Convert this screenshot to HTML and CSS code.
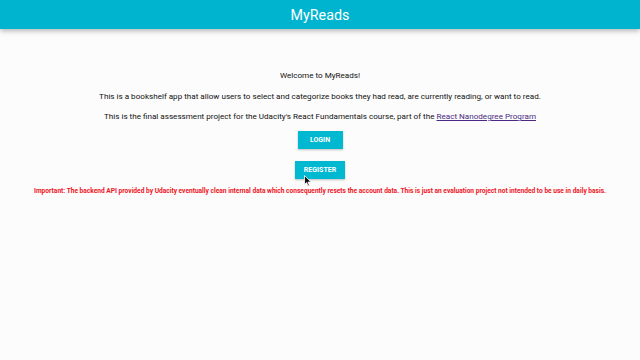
FILE: index.html
```html
<!DOCTYPE html>
<html>
<head>
<meta charset="utf-8">
<link rel="stylesheet" href="styles.css">
</head>
<body>
<header class="app-bar"><h1 class="app-title">MyReads</h1></header>
<main class="welcome">
  <p class="line">Welcome to MyReads!</p>
  <p class="line">This is a bookshelf app that allow users to select and categorize books they had read, are currently reading, or want to read.</p>
  <p class="line">This is the final assessment project for the Udacity's React Fundamentals course, part of the <a class="link" href="#">React Nanodegree Program</a></p>
  <div class="actions">
    <button class="btn">Login</button>
    <button class="btn">Register</button>
  </div>
  <p class="warning">Important: The backend API provided by Udacity eventually clean internal data which consequently resets the account data. This is just an evaluation project not intended to be use in daily basis.</p>
</main>
<svg class="cursor" width="8" height="12" viewBox="0 0 8 12"><path d="M0.5 0.5 L0.5 9.5 L2.6 7.6 L4 11 L5.4 10.4 L4 7.1 L7 7.1 Z" fill="#111" stroke="#fff" stroke-width="0.8"/></svg>
</body>
</html>
```
FILE: styles.css
```css
html, body {
  margin: 0;
  padding: 0;
  background: #fcfcfc;
  font-family: Roboto, "Noto Sans", sans-serif;
  height: 100%;
}
.app-bar {
  height: 29px;
  background: #00b4cf;
  display: flex;
  align-items: center;
  justify-content: center;
  box-shadow: 0 2px 5px rgba(0,0,0,0.28);
}
.app-title {
  margin: 0;
  color: #fff;
  font-size: 14.3px;
  font-weight: 400;
}
.welcome {
  display: flex;
  flex-direction: column;
  align-items: center;
  padding-top: 41px;
  text-align: center;
}
.line {
  margin: 0 0 10.5px;
  font-size: 8.1px;
  line-height: 10px;
  color: #111;
}
.link {
  color: #4a2a82;
}
.actions {
  display: flex;
  flex-direction: column;
  align-items: center;
  gap: 12px;
  margin-top: -0.5px;
}
.btn {
  border: none;
  background: #00b8d0;
  color: #fff;
  font-family: Roboto, sans-serif;
  font-weight: 700;
  font-size: 7px;
  text-transform: uppercase;
  height: 18px;
  padding: 0 9px;
  min-width: 45px;
  box-shadow: 0 1px 2px rgba(0,0,0,0.25);
}
.warning {
  margin: 7px 0 0;
  color: #f0141e;
  font-weight: 700;
  font-size: 6.6px;
  line-height: 10px;
}
.cursor {
  position: absolute;
  left: 304px;
  top: 175px;
}
```
